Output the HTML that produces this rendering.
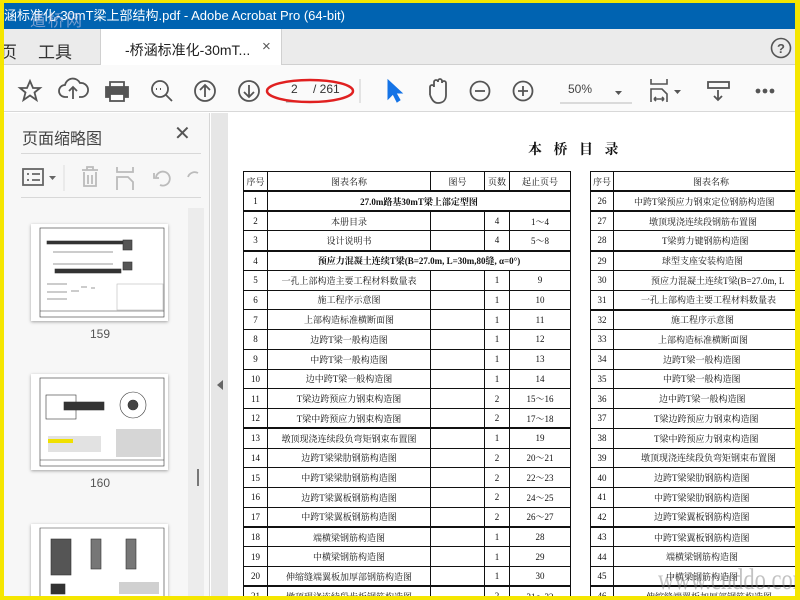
<!DOCTYPE html>
<html><head><meta charset="utf-8"><style>
*{margin:0;padding:0;box-sizing:border-box}
body{width:800px;height:600px;overflow:hidden;background:#f5e600;position:relative;font-family:"Liberation Sans","Noto Sans CJK SC",sans-serif}
.a{position:absolute}
#frame{left:4px;top:3px;width:791px;height:593px;background:#fff;overflow:hidden}
#title{left:0;top:0;width:791px;height:26px;background:#0063b1;color:#fff;font-size:13px;line-height:26px;padding-left:0}
#tabs{left:0;top:26px;width:791px;height:36px;background:#ebebeb;border-bottom:1px solid #d0d0d0}
#tb{left:0;top:62px;width:791px;height:47px;background:#fafafa;border-bottom:1px solid #d8d8d8}
svg{position:absolute}
table{border-collapse:collapse;position:absolute;table-layout:fixed;font-family:"Liberation Serif","Noto Serif CJK SC",serif;font-size:9px;color:#111}
td{border:1px solid #111;height:19.75px;text-align:center;padding:0;white-space:nowrap;overflow:hidden}
tr.t td{border-top:2px solid #111}
</style></head><body>
<div id="frame" class="a">
<div id="title" class="a">涵标准化-30mT梁上部结构.pdf - Adobe Acrobat Pro (64-bit)<span class="a" style="left:26px;top:6px;color:rgba(200,200,230,.6);font-size:16px;letter-spacing:2px">道桥网</span></div>
<div id="tabs" class="a">
 <span class="a" style="left:-4px;top:9px;font-size:17px;color:#333">页</span>
 <span class="a" style="left:34px;top:9px;font-size:17px;color:#333">工具</span>
 <div class="a" style="left:96px;top:0;width:182px;height:36px;background:#fff;border-left:1px solid #d0d0d0;border-right:1px solid #d0d0d0"></div>
 <span class="a" style="left:121px;top:11px;font-size:14px;color:#222">-桥涵标准化-30mT...</span>
 <span class="a" style="left:258px;top:9px;font-size:15px;color:#555">×</span>
 <svg style="left:766px;top:8px" width="22" height="22"><circle cx="11" cy="11" r="9.5" fill="none" stroke="#555" stroke-width="1.6"/><text x="11" y="16" font-size="13" font-weight="bold" text-anchor="middle" fill="#555" font-family="Liberation Sans">?</text></svg>
</div>
<div id="tb" class="a">
 <svg style="left:0;top:0" width="791" height="47" fill="none" stroke="#555" stroke-width="1.8">
  <path d="M26 16 L29 23 L36 23 L30.5 27.5 L32.5 35 L26 30.5 L19.5 35 L21.5 27.5 L16 23 L23 23 Z"/>
  <path d="M64 32 h-3 a6 6 0 0 1 0-12 a8 8 0 0 1 15 -2 a6 6 0 0 1 2 14 h-3 M69 34 v-12 M65 26 l4-4 l4 4"/>
  <path d="M106 22 v-5 h14 v5" /><rect x="102" y="22" width="22" height="10" fill="#555"/><rect x="106" y="29" width="14" height="7" fill="#fff"/>
  <circle cx="156" cy="24" r="8"/><path d="M162 30 l6 6"/><path d="M152 24h1 M156 24h1 M160 24h0" stroke-width="2"/>
  <circle cx="201" cy="26" r="10"/><path d="M201 32 v-12 M196 25 l5-5 l5 5"/>
  <circle cx="245" cy="26" r="10"/><path d="M245 20 v12 M240 27 l5 5 l5-5"/>
  <path d="M282 37 h28" stroke="#999" stroke-width="1"/>
  <path d="M356 14 v24" stroke="#ccc" stroke-width="1"/>
  <path d="M384 15 L384 34 L389 29 L393 37 L396 35 L392 28 L398 28 Z" fill="#1473e6" stroke="#1473e6" stroke-width="1"/>
  <path d="M426 30 v-8 a2 2 0 0 1 4 0 v-5 a2 2 0 0 1 4 0 v-1 a2 2 0 0 1 4 0 v2 a2 2 0 0 1 4 0 v12 c0 5-3 8-8 8 c-4 0-6-3-8-8"/>
  <circle cx="476" cy="26" r="9.5"/><path d="M471 26h10"/>
  <circle cx="519" cy="26" r="9.5"/><path d="M514 26h10 M519 21v10"/>
  <path d="M556 38 h72" stroke="#bbb" stroke-width="1"/>
  <path d="M611 26 h7 l-3.5 4z" fill="#555" stroke="none"/>
  <path d="M647 14 v5 h16 v-5 M647 37 v-13 h11 l5 5 v8 M650 34 h10 M650 34 l2-2 M650 34 l2 2 M660 34 l-2-2 M660 34 l-2 2" stroke-width="1.6"/>
  <path d="M670 25 h7 l-3.5 4z" fill="#555" stroke="none"/>
  <rect x="704" y="17" width="21" height="6"/><path d="M714 25 v10 M710 31 l4 4 l4-4"/>
  <circle cx="754" cy="26" r="1.5" fill="#555"/><circle cx="761" cy="26" r="1.5" fill="#555"/><circle cx="768" cy="26" r="1.5" fill="#555"/>
  <ellipse cx="306" cy="26" rx="43" ry="11" stroke="#e02020" stroke-width="2.5"/>
 </svg>
 <span class="a" style="left:287px;top:17px;font-size:12px;color:#333">2</span>
 <span class="a" style="left:309px;top:17px;font-size:12px;color:#333">/ 261</span>
 <span class="a" style="left:564px;top:17px;font-size:12px;color:#444">50%</span>
</div>
<!-- left panel -->
<div class="a" style="left:0;top:110px;width:206px;height:483px;background:#f7f7f7;border-right:1px solid #d6d6d6">
 <span class="a" style="left:18px;top:12px;font-size:16px;color:#444">页面缩略图</span>
 <span class="a" style="left:170px;top:8px;font-size:20px;color:#555">✕</span>
 <div class="a" style="left:17px;top:40px;width:180px;height:1px;background:#d8d8d8"></div>
 <svg style="left:0;top:40px" width="206" height="45" fill="none" stroke="#666" stroke-width="1.8">
  <rect x="19" y="16" width="20" height="16"/><path d="M23 21h2 M28 21h8 M23 27h2 M28 27h8"/><path d="M45 23h7l-3.5 4z" fill="#666" stroke="none"/>
  <path d="M60 12v26" stroke="#ddd" stroke-width="1"/>
  <g stroke="#bbb"><path d="M78 17h16 M83 17v-3h6v3 M80 19v14h12v-14 M84 22v9 M88 22v9"/>
  <path d="M113 14v5h16v-5 M113 37v-13h11l5 5v8"/>
  <path d="M156 32a7 7 0 1 0-4-8 M150 20v5h5"/><path d="M194 20a7 7 0 0 0-10 4"/></g>
 </svg>
 <div class="a" style="left:17px;top:84px;width:180px;height:1px;background:#d8d8d8"></div>
 <div class="a" style="left:184px;top:95px;width:16px;height:388px;background:#ececec"></div>
 <div class="a" style="left:193px;top:356px;width:2px;height:17px;background:#777"></div>
 <div class="a" style="left:27px;top:111px;width:137px;height:97px;background:#fff;box-shadow:0 1px 3px rgba(0,0,0,.35)">
  <svg width="137" height="97" stroke="#333" fill="none" stroke-width=".6"><rect x="9" y="4" width="124" height="89"/><rect x="16" y="17" width="78" height="3" fill="#333"/><rect x="24" y="45" width="66" height="4" fill="#333"/><rect x="92" y="16" width="9" height="10" fill="#555"/><rect x="92" y="38" width="9" height="8" fill="#555"/><rect x="86" y="60" width="46" height="26" stroke="#bbb"/><path d="M9 87h124 M16 60h20 M16 68h20 M16 75h20 M40 67h8 M50 63h6 M60 64h4 M22 28h60 M22 40h60"/></svg>
 </div>
 <span class="a" style="left:86px;top:214px;font-size:12px;color:#555">159</span>
 <div class="a" style="left:27px;top:261px;width:137px;height:96px;background:#fff;box-shadow:0 1px 3px rgba(0,0,0,.35)">
  <svg width="137" height="96" stroke="#333" fill="none" stroke-width=".6"><rect x="9" y="4" width="124" height="88"/><rect x="15" y="21" width="30" height="24"/><rect x="33" y="28" width="40" height="8" fill="#333"/><circle cx="102" cy="31" r="13"/><circle cx="102" cy="31" r="5" fill="#444"/><rect x="17" y="62" width="53" height="16" fill="#e2e2e2" stroke="none"/><rect x="17" y="65" width="25" height="4" fill="#f0e000" stroke="none"/><rect x="85" y="55" width="45" height="28" fill="#d6d6d6" stroke="none"/><path d="M9 86h124"/></svg>
 </div>
 <span class="a" style="left:86px;top:363px;font-size:12px;color:#555">160</span>
 <div class="a" style="left:27px;top:411px;width:137px;height:80px;background:#fff;box-shadow:0 1px 3px rgba(0,0,0,.35)">
  <svg width="137" height="80" stroke="#333" fill="none" stroke-width=".6"><path d="M9 80V4h124v76"/><rect x="20" y="15" width="20" height="36" fill="#555"/><rect x="60" y="15" width="10" height="30" fill="#777"/><rect x="95" y="15" width="10" height="30" fill="#777"/><rect x="20" y="60" width="14" height="10" fill="#333"/><rect x="88" y="58" width="40" height="12" fill="#d0d0d0" stroke="none"/></svg>
 </div>
</div>
<div class="a" style="left:207px;top:110px;width:17px;height:483px;background:#e6e6e6"></div>
<svg style="left:212px;top:377px" width="8" height="10"><path d="M7 0v10L1 5z" fill="#666"/></svg>
<div class="a" style="left:224px;top:110px;width:567px;height:483px;background:#fff;overflow:hidden">
 <div class="a" style="left:300px;top:26px;font-family:'Liberation Serif','Noto Serif CJK SC',serif;font-size:14px;font-weight:bold;letter-spacing:4px;color:#111">本 桥 目 录</div>
 <table style="left:15px;top:58px;width:327px">
  <colgroup><col style="width:24px"><col style="width:163px"><col style="width:54px"><col style="width:25px"><col style="width:61px"></colgroup>
  <tr><td>序号</td><td>图表名称</td><td>图号</td><td>页数</td><td>起止页号</td></tr>
  <tr class="t"><td>1</td><td colspan="4" style="font-weight:bold">27.0m路基30mT梁上部定型图</td></tr>
  <tr class="t"><td>2</td><td>本册目录</td><td></td><td>4</td><td>1～4</td></tr>
  <tr><td>3</td><td>设计说明书</td><td></td><td>4</td><td>5～8</td></tr>
  <tr class="t"><td>4</td><td colspan="4" style="font-weight:bold">预应力混凝土连续T梁(B=27.0m, L=30m,80缝, α=0°)</td></tr>
  <tr><td>5</td><td>一孔上部构造主要工程材料数量表</td><td></td><td>1</td><td>9</td></tr>
  <tr><td>6</td><td>施工程序示意图</td><td></td><td>1</td><td>10</td></tr>
  <tr><td>7</td><td>上部构造标准横断面图</td><td></td><td>1</td><td>11</td></tr>
  <tr><td>8</td><td>边跨T梁一般构造图</td><td></td><td>1</td><td>12</td></tr>
  <tr><td>9</td><td>中跨T梁一般构造图</td><td></td><td>1</td><td>13</td></tr>
  <tr><td>10</td><td>边中跨T梁一般构造图</td><td></td><td>1</td><td>14</td></tr>
  <tr><td>11</td><td>T梁边跨预应力钢束构造图</td><td></td><td>2</td><td>15～16</td></tr>
  <tr><td>12</td><td>T梁中跨预应力钢束构造图</td><td></td><td>2</td><td>17～18</td></tr>
  <tr class="t"><td>13</td><td>墩顶现浇连续段负弯矩钢束布置图</td><td></td><td>1</td><td>19</td></tr>
  <tr><td>14</td><td>边跨T梁梁肋钢筋构造图</td><td></td><td>2</td><td>20～21</td></tr>
  <tr><td>15</td><td>中跨T梁梁肋钢筋构造图</td><td></td><td>2</td><td>22～23</td></tr>
  <tr><td>16</td><td>边跨T梁翼板钢筋构造图</td><td></td><td>2</td><td>24～25</td></tr>
  <tr><td>17</td><td>中跨T梁翼板钢筋构造图</td><td></td><td>2</td><td>26～27</td></tr>
  <tr class="t"><td>18</td><td>端横梁钢筋构造图</td><td></td><td>1</td><td>28</td></tr>
  <tr><td>19</td><td>中横梁钢筋构造图</td><td></td><td>1</td><td>29</td></tr>
  <tr><td>20</td><td>伸缩缝端翼板加厚部钢筋构造图</td><td></td><td>1</td><td>30</td></tr>
  <tr class="t"><td>21</td><td>墩顶现浇连续段齿板钢筋构造图</td><td></td><td>2</td><td>31～32</td></tr>
 </table>
 <table style="left:362px;top:58px;width:260px">
  <colgroup><col style="width:23px"><col style="width:237px"></colgroup>
  <tr><td>序号</td><td style="text-align:left;padding-left:79px">图表名称</td></tr>
  <tr class="t"><td>26</td><td style="text-align:left;padding-left:20px">中跨T梁预应力钢束定位钢筋构造图</td></tr>
  <tr class="t"><td>27</td><td style="text-align:left;padding-left:35px">墩顶现浇连续段钢筋布置图</td></tr>
  <tr><td>28</td><td style="text-align:left;padding-left:48px">T梁剪力键钢筋构造图</td></tr>
  <tr class="t"><td>29</td><td style="text-align:left;padding-left:48px">球型支座安装构造图</td></tr>
  <tr><td>30</td><td style="text-align:left;padding-left:37px">预应力混凝土连续T梁(B=27.0m, L</td></tr>
  <tr><td>31</td><td style="text-align:left;padding-left:27px">一孔上部构造主要工程材料数量表</td></tr>
  <tr class="t"><td>32</td><td style="text-align:left;padding-left:57px">施工程序示意图</td></tr>
  <tr><td>33</td><td style="text-align:left;padding-left:44px">上部构造标准横断面图</td></tr>
  <tr><td>34</td><td style="text-align:left;padding-left:49px">边跨T梁一般构造图</td></tr>
  <tr><td>35</td><td style="text-align:left;padding-left:49px">中跨T梁一般构造图</td></tr>
  <tr><td>36</td><td style="text-align:left;padding-left:45px">边中跨T梁一般构造图</td></tr>
  <tr><td>37</td><td style="text-align:left;padding-left:40px">T梁边跨预应力钢束构造图</td></tr>
  <tr><td>38</td><td style="text-align:left;padding-left:40px">T梁中跨预应力钢束构造图</td></tr>
  <tr><td>39</td><td style="text-align:left;padding-left:27px">墩顶现浇连续段负弯矩钢束布置图</td></tr>
  <tr><td>40</td><td style="text-align:left;padding-left:40px">边跨T梁梁肋钢筋构造图</td></tr>
  <tr><td>41</td><td style="text-align:left;padding-left:40px">中跨T梁梁肋钢筋构造图</td></tr>
  <tr><td>42</td><td style="text-align:left;padding-left:40px">边跨T梁翼板钢筋构造图</td></tr>
  <tr class="t"><td>43</td><td style="text-align:left;padding-left:40px">中跨T梁翼板钢筋构造图</td></tr>
  <tr><td>44</td><td style="text-align:left;padding-left:52px">端横梁钢筋构造图</td></tr>
  <tr><td>45</td><td style="text-align:left;padding-left:52px">中横梁钢筋构造图</td></tr>
  <tr class="t"><td>46</td><td style="text-align:left;padding-left:32px">伸缩缝端翼板加厚部钢筋构造图</td></tr>
 </table>
 <div class="a" style="left:430px;top:450px;font-family:'Liberation Serif',serif;font-size:30px;color:rgba(120,120,120,.45);transform:scaleX(.75);transform-origin:left">www.cnddo.com</div>
</div>
</div>
</body></html>
